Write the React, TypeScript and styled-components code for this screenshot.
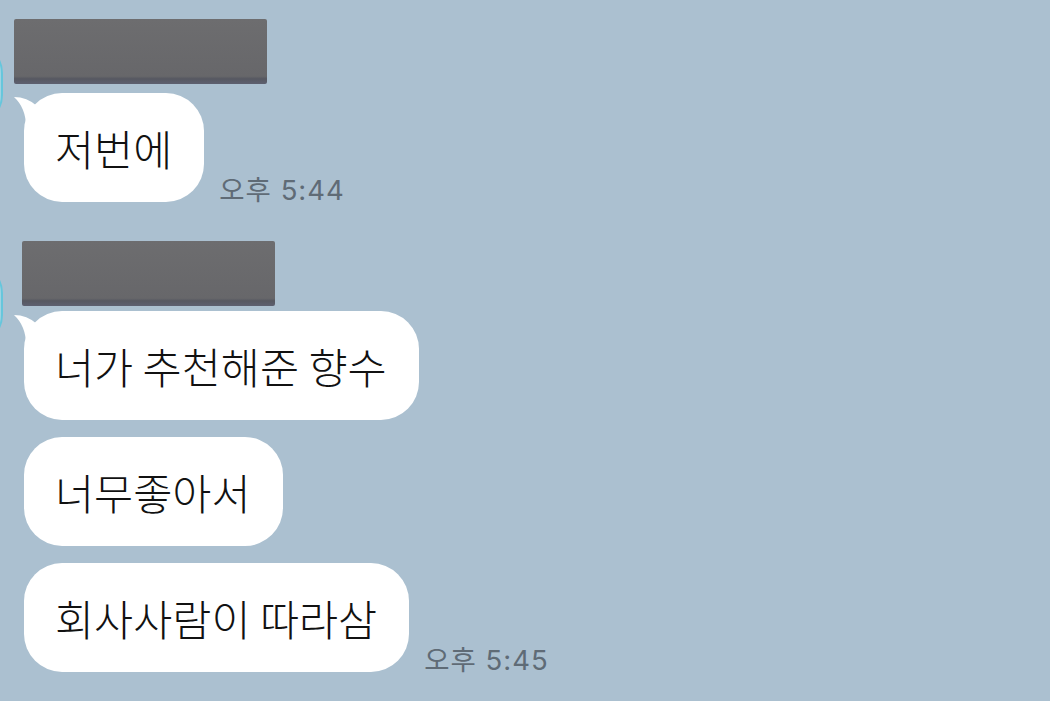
import React from 'react';
import styled, { createGlobalStyle } from 'styled-components';

const GlobalStyle = createGlobalStyle`
  body {
    margin: 0;
    background: #abc0d0;
    font-family: "Noto Sans CJK KR", "Noto Sans", sans-serif;
    overflow: hidden;
  }
`;

const Chat = styled.div`
  width: 1050px;
  height: 701px;
  background: #abc0d0;
  padding-top: 19px;
  box-sizing: border-box;
  overflow: hidden;
  display: flex;
  flex-direction: column;
  gap: 39px;
`;

const Group = styled.div`
  display: flex;
  align-items: flex-start;
`;

// only the right edge of the profile picture shows on screen
const Avatar = styled.div<{ $top: number }>`
  flex: none;
  width: 80px;
  height: 82px;
  margin-top: ${p => p.$top}px;
  margin-left: -77px;
  border-radius: 30px;
  background: #9fd3e2;
  border: 2px solid #66c6dc;
  box-sizing: border-box;
`;

const Column = styled.div`
  margin-left: 21px;
  display: flex;
  flex-direction: column;
`;

const NameBlock = styled.div<{ $shift: number; $gap: number }>`
  width: 253px;
  height: 65px;
  margin-left: ${p => p.$shift}px;
  margin-bottom: ${p => p.$gap}px;
  border-radius: 2px;
  background: linear-gradient(#6d6d6f, #67676a 88%, #565861 92%, #5d6070);
`;

const Messages = styled.div`
  display: flex;
  flex-direction: column;
  gap: 17px;
`;

const Row = styled.div`
  display: flex;
  align-items: flex-end;
`;

const Bubble = styled.div`
  position: relative;
  background: #fff;
  color: #111;
  border-radius: 38px;
  padding: 25px 32px 24px 31px;
  font-size: 42.5px;
  font-weight: 300;
  line-height: 60px;
  white-space: nowrap;
`;

const Tail = styled.svg`
  position: absolute;
  left: -11px;
  top: 0;
`;

const Time = styled.span`
  margin-left: 15px;
  margin-bottom: -3px;
  font-family: Inter, "Noto Sans CJK KR", sans-serif;
  font-size: 27.5px;
  letter-spacing: 1px;
  line-height: 30px;
  color: #5f6b76;
  white-space: nowrap;
`;

interface Message {
  text: string;
  time?: string;
}

interface ChatGroup {
  shift: number;
  gap: number;
  avatarTop: number;
  messages: Message[];
}

const groups: ChatGroup[] = [
  {
    shift: -10,
    gap: 9,
    avatarTop: 24,
    messages: [{ text: '저번에', time: '오후 5:44' }],
  },
  {
    shift: -2,
    gap: 5,
    avatarTop: 22,
    messages: [
      { text: '너가 추천해준 향수' },
      { text: '너무좋아서' },
      { text: '회사사람이 따라삼', time: '오후 5:45' },
    ],
  },
];

function BubbleTail() {
  return (
    <Tail width="32" height="34" viewBox="0 0 32 34">
      <path d="M1 4 Q14 4 24 13 L24 34 L13 34 Q13 15 1 4 Z" fill="#fff" />
    </Tail>
  );
}

export default function App() {
  return (
    <>
      <GlobalStyle />
      <Chat>
        {groups.map((g, gi) => (
          <Group key={gi}>
            <Avatar $top={g.avatarTop} />
            <Column>
              <NameBlock $shift={g.shift} $gap={g.gap} />
              <Messages>
                {g.messages.map((m, mi) => (
                  <Row key={mi}>
                    <Bubble>
                      {mi === 0 && <BubbleTail />}
                      {m.text}
                    </Bubble>
                    {m.time && <Time>{m.time}</Time>}
                  </Row>
                ))}
              </Messages>
            </Column>
          </Group>
        ))}
      </Chat>
    </>
  );
}
